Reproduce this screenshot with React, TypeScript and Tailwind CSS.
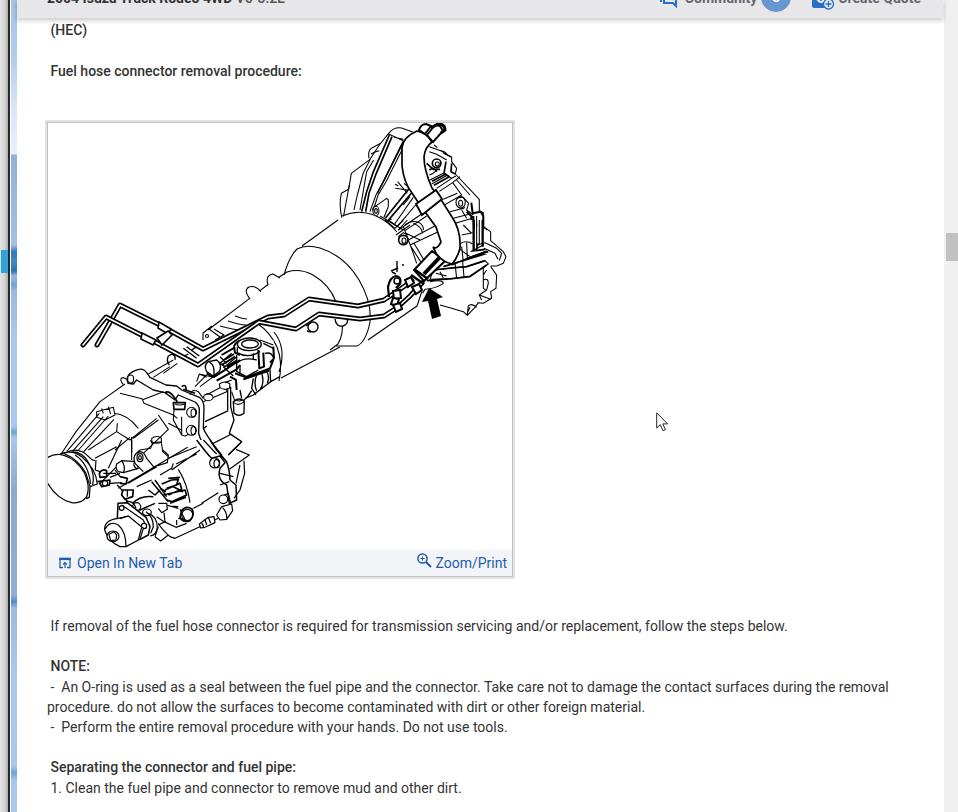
import React from "react";

const NB = "\u00a0";

function Tube({ d, outer = 5, inner = 1.6 }: { d: string; outer?: number; inner?: number }) {
  return (
    <g fill="none" strokeLinejoin="round" strokeLinecap="round">
      <path d={d} stroke="#000" strokeWidth={outer} />
      <path d={d} stroke="#fff" strokeWidth={inner} />
    </g>
  );
}

function BellHousing() {
  return (
    <g transform="translate(270 110) scale(.3333)" stroke="#000" strokeWidth="3.2" fill="none" strokeLinejoin="round">
      <path fill="#fff" d="M216 325Q206 285 214 250L236 238L244 190L300 148L328 105L356 70Q372 50 395 54L428 66" />
      <path d="M238 225L220 322M301 148L280 188L262 255L252 300M297 145Q293 122 304 115L332 100M303 132Q315 125 328 122M311 150L290 185L270 300" />
      <path strokeWidth="5" d="M358 75L309 188L290 245L275 305M366 80L319 190L297 250L287 305" />
      <path d="M356 72L400 92L340 215L318 255L300 305M408 96L348 215L324 256L310 300M372 82L400 88" />
      <path strokeWidth="4.5" d="M398 100L340 215L322 250" />
      <path fill="#fff" d="M308 302Q308 290 320 286L350 265L355 270L355 290L342 322" />
      <ellipse cx="318" cy="303" rx="9" ry="14" />
      <ellipse cx="318" cy="303" rx="4" ry="7" />
      <path d="M375 222L385 228M376 235L412 240M383 215L412 250M402 220L416 232" />
      <path strokeWidth="5" d="M418 235L346 325M424 250L354 332" />
      <path d="M430 262L372 345M437 285L382 350M400 285L420 260M330 318L400 360M345 335L365 327M455 312L385 360M470 318L405 362" />
      <path d="M405 345Q425 328 448 338Q462 348 460 360" />
      <path d="M478 110L512 122L545 142L545 155L560 175L556 192L628 268L628 302L640 308L640 350L652 360" />
      <path d="M478 125L500 133L530 150M520 130L545 142M512 122Q528 124 532 135M492 105L502 113" />
      <circle cx="500" cy="160" r="13" strokeWidth="5" />
      <circle cx="502" cy="162" r="6" />
      <path strokeWidth="5" d="M470 160L490 178L510 178M528 155L522 190L538 200M545 160L543 185L556 192M478 180Q495 170 500 185" />
      <path d="M478 195Q495 190 500 178M480 210L520 190L545 205M485 222L532 196M500 235L545 205L558 198M508 244L548 218L575 255L515 290M548 218L570 200M560 210L600 255M520 268L562 250" />
      <path strokeWidth="5" d="M486 214L528 192M492 226L538 200" />
      <ellipse cx="572" cy="277" rx="14" ry="17" />
      <ellipse cx="572" cy="280" rx="6" ry="9" />
      <path d="M562 264L580 262L596 280L590 300L610 315M585 292Q575 300 570 294" />
      <path strokeWidth="6" d="M604 278L608 310L632 305L640 318L640 358M610 318L612 358M590 305L604 318L604 330" />
      <path d="M550 325L600 312M556 340L602 326M620 318L620 350M575 300L590 325M540 305L580 295" />
    </g>
  );
}

function LowerHousing() {
  return (
    <g transform="translate(270 220) scale(.3333)" stroke="#000" strokeWidth="3.2" fill="none" strokeLinejoin="round">
      <path d="M640 20L662 35L662 62L700 95L708 110L700 130L680 138L662 138M645 68L680 85L695 100L688 122M642 85L675 100L684 118" />
      <path d="M662 140L680 165L678 205L662 215L665 235L640 250L625 248L615 262L592 286L580 275L545 265L510 255" />
      <path d="M640 130L640 205L650 212M640 180Q655 172 655 190L650 210L628 225L635 240M592 284L595 258Q605 248 620 262M600 262L590 284M650 150L640 165M628 225L662 238" />
      <path strokeWidth="7" d="M611 0L611 95M638 0L638 80" />
      <path d="M620 10L620 80M628 0L628 75M580 15L605 40M575 45L608 38M572 70Q590 60 608 72M570 88L600 110M575 80L580 125M590 68L592 115M602 95L640 75M606 110L650 92M620 75L645 68" />
      <path strokeWidth="5" d="M545 135L610 108L655 95M520 140L650 100M625 70L618 92L645 88" />
      <path fill="#fff" d="M490 150L555 143L590 140L645 122L655 132L600 168L545 176L480 178Z" />
      <path strokeWidth="5" d="M490 150L555 143L590 140L645 122M650 135L600 170L545 176L470 182" />
      <path d="M555 128L560 175M578 126L582 170" />
      <path d="M510 155L520 175M498 160L530 168M480 185Q520 178 520 190Q500 205 465 208L458 220" />
      <path d="M345 0L375 25M355 0L380 18M375 25L400 0M385 30L412 0M378 45L420 15M400 20L430 100L440 130M415 60L500 15M420 75L505 35M408 40L450 60M420 75L455 130M432 70L462 120M430 10Q455 20 458 40" />
      <circle cx="400" cy="60" r="14" fill="#fff" strokeWidth="5" />
      <ellipse cx="402" cy="62" rx="6" ry="8" />
      <path d="M385 50L400 38L415 45" />
    </g>
  );
}

function MainCase() {
  return (
    <g stroke="#000" strokeWidth="1.1" fill="none" strokeLinejoin="round">
      <path fill="#fff" stroke="none" d="M344 216Q362 208 380 217Q410 242 418 290L416 306L372 338L356 347L336 345L270 382L240 400L203 330L245 298L285 270L300 247Z" />
      <path d="M338 220L302 246M342 216Q358 209 374 215Q388 221 397 232" />
      <path d="M284 275Q289 257 297 249Q306 244 320 248Q345 256 359 280Q372 302 370 322Q366 342 357 346L336 346" />
      <path d="M270 283L287 272Q300 268 313 275Q330 285 336 302M342 319Q344 334 338 344L330 350M368 340L417 306L422 291M340 347L281 378" />
      <path d="M270 283L208 330" />
      <path fill="#fff" d="M250 299Q243 290 249 287Q256 285 261 292M268 285Q265 275 273 274L280 278" />
      <path d="M235 316Q243 319 247 319M228 321Q240 325 246 325M220 326Q235 330 240 330M214 329L224 335L215 340M203 340L203 333L212 326M209 329L220 337" />
      <circle cx="207" cy="336" r="1.5" />
      <path d="M258 324Q270 332 277 347Q283 362 279 381M274 332Q287 348 279 372" />
      <path d="M391 271L398 268M397 261L397 272M392 272L396 274" strokeWidth="1.4" />
      <circle cx="403" cy="265" r="1" fill="#000" stroke="none" />
    </g>
  );
}

function GearCase() {
  return (
    <g transform="translate(40 340) scale(.3333)" stroke="#000" strokeWidth="3.2" fill="none" strokeLinejoin="round">
      <path fill="#fff" stroke="none" d="M250 130L400 50L720 80L690 135L620 200L580 215L568 285L605 305L628 345L600 450L540 500L380 590L90 400L60 340Z" />
      <path d="M65 340L108 275L180 185L255 132M80 335L178 220M92 340L190 230M105 342L205 228M125 342L222 238" />
      <path d="M170 215L220 202L225 225L195 240L170 232ZM185 205L190 220M205 200L212 222" />
      <path d="M222 220Q260 222 295 265M232 250L230 275L145 330M230 275L270 300L350 235M275 290L275 360M225 330L270 292M280 295L355 240M355 225L385 268L300 350" />
      <path strokeWidth="4" fill="#fff" d="M264 130Q254 105 285 92Q308 80 320 98L330 112L378 135L410 138L425 150L478 172Q492 182 492 205L490 265Q500 290 545 345L520 350Q480 305 476 280L478 210Q478 196 465 186L415 165L405 180L375 158L340 150L310 132L290 120L280 132Z" />
      <ellipse cx="272" cy="117" rx="9" ry="12" fill="#fff" />
      <path d="M250 134Q238 120 245 114Q252 110 262 120M240 160L306 176L312 190L400 225L412 235M306 180L370 155M325 102L400 60M340 112L390 80M370 100L412 70" />
      <path strokeWidth="5" d="M375 158Q385 150 400 168L412 185M400 188L436 188L434 208L402 208ZM425 140Q440 130 438 150M430 148L465 160" />
      <path d="M405 192Q418 198 434 192M402 208L400 240L425 285L435 288L470 272M425 230L425 285M385 250L425 270" />
      <circle cx="455" cy="217" r="15" fill="#fff" />
      <ellipse cx="460" cy="219" rx="7" ry="12" />
      <circle cx="454" cy="271" r="15" fill="#fff" />
      <ellipse cx="460" cy="272" rx="7" ry="12" />
      <path d="M450 165Q455 145 475 155L490 175M465 140L500 105M478 102L520 112L555 90M470 125L478 102L500 112M490 170L545 140M490 185L560 155L562 140M520 110L480 140" />
      <ellipse cx="505" cy="172" rx="14" ry="10" fill="#fff" />
      <path d="M494 165Q505 157 517 166" />
      <path strokeWidth="4" d="M495 245L565 212M492 265L500 258M563 140L563 210M572 140L572 200L582 240L568 280L605 305L565 345M490 325L575 282" />
      <path fill="#fff" d="M538 132Q555 120 570 132L568 145Q553 152 540 143Z" />
      <path strokeWidth="4" fill="#fff" d="M580 185Q595 170 613 183L612 220Q597 232 582 220Z" />
      <path d="M580 187Q596 200 613 185M588 180Q597 186 606 180M575 155L585 185" />
      <path d="M335 295Q348 285 364 294L364 306Q350 314 336 306ZM338 308L332 325L300 330Q285 340 285 360M364 306L368 335L385 350M372 360L470 320" />
    </g>
  );
}

function ValveBlock() {
  return (
    <g transform="translate(40 340) scale(.3333)" stroke="#000" strokeWidth="4" fill="none" strokeLinejoin="round">
      <path fill="#fff" stroke="none" d="M580 0L700 0L712 60L690 125L620 170L580 120Z" />
      <path strokeWidth="6" d="M582 18Q590 2 610 0M582 18L585 38L600 45M700 20L702 55L690 68M655 30L658 85L672 80L670 38M560 80L590 62M520 112L555 90L600 60M530 122L590 88L600 75" />
      <ellipse cx="628" cy="13" rx="36" ry="19" fill="#fff" />
      <ellipse cx="630" cy="12" rx="25" ry="12" />
      <path d="M592 22L592 38Q625 58 660 34M590 45L590 95L620 110L655 90M590 70Q610 50 650 60M600 75L600 100M640 40L640 60M670 10L700 25M660 0L700 15M675 40Q695 35 700 52" />
      <path strokeWidth="6" d="M585 100L618 112L690 85L700 60M610 118L640 108L688 92M570 110L588 120L590 150" />
      <path d="M690 88L692 125L640 165L615 175M665 100Q675 130 660 150M650 105Q640 130 650 152M640 115L635 145L648 165M680 95Q690 110 682 130M635 152Q625 170 610 182M575 120L555 128M550 80L580 108M600 150L605 175M692 125L720 110" />
      <path d="M500 95Q490 75 505 65L530 60Q545 70 540 92L520 108ZM508 66Q525 75 522 105M540 50L560 70M575 40L540 70L555 80L590 50" />
      <path strokeWidth="6" d="M545 75L585 50M500 100L520 112M545 45L585 22M555 58L582 42" />
      <path d="M388 75Q378 62 385 48L400 40M395 42Q408 45 405 60M430 25L470 55M440 20L478 48M445 42L430 50M455 30L470 20" />
    </g>
  );
}

function TransferCase() {
  return (
    <g transform="translate(40 440) scale(.3333)" stroke="#000" strokeWidth="3.6" fill="none" strokeLinejoin="round">
      <path d="M60 42Q95 28 125 50Q168 85 172 132L150 140M78 38Q115 18 146 50Q160 65 165 60M95 35Q130 35 148 72Q165 105 158 135M105 45Q145 70 152 132" fill="#fff" />
      <path fill="#fff" d="M20 54Q45 38 72 46Q110 58 133 98Q152 140 140 170Q124 192 95 188Q50 178 20 125" />
      <path d="M75 42Q115 58 138 100L150 140L148 172L138 176M80 45L70 38" />
      <path d="M245 0L205 85M165 55L230 20M168 60L166 90L180 95M275 0L275 38M180 130L230 80M190 100L228 100" />
      <path fill="#fff" d="M230 72L245 62L290 65L295 85L250 98L235 95Q225 85 230 72Z" />
      <path d="M245 62Q258 80 250 98M285 65Q275 75 292 88" />
      <path strokeWidth="5" d="M178 100Q185 85 200 92L200 110L180 112ZM172 125L210 120L208 135L185 140L178 128M240 110L262 115L258 132L240 130M248 150L280 150L278 170L255 178L245 165Z" />
      <circle cx="195" cy="130" r="8" fill="#fff" />
      <path d="M210 112L240 100M210 130L245 128M232 135L250 155M255 178L265 185M262 150L262 170M225 90L240 110" />
      <path fill="#fff" d="M285 70Q275 42 300 35Q312 35 320 50L355 40L385 50L382 68L345 85L310 95Z" stroke="none" />
      <path d="M310 95L285 70Q275 42 300 35Q312 35 320 55L345 85" />
      <ellipse cx="300" cy="53" rx="9" ry="12" fill="#fff" />
      <ellipse cx="300" cy="53" rx="4" ry="6" />
      <path d="M332 0L335 8L364 6M368 30L385 45L382 68L350 78M235 145L443 22M265 130L350 80M290 140L335 120M395 90L480 30M360 105L395 85L400 70M408 72L470 42" />
      <path strokeWidth="4.5" d="M335 125L385 185M345 120L380 170M278 190Q300 165 340 170M325 150L345 165L360 150M282 200L300 210L345 190" />
      <circle cx="290" cy="200" r="12" fill="#fff" />
      <ellipse cx="321" cy="217" rx="13" ry="10" fill="#fff" />
      <path strokeWidth="5" d="M365 132L395 120L415 118L410 135L380 145M375 150L420 130L425 148L385 165M370 165L435 150L440 165L395 185L380 180M390 190L438 172M360 145L378 155M385 115L420 112M400 140L430 155" />
      <path d="M415 88Q442 130 450 188M355 190L380 190L382 208L365 218L355 205M372 218L375 245L355 255M415 200L385 198M380 195L415 205M485 190L535 158M460 205L490 190" />
      <path d="M410 240L410 255M350 230L372 245L408 262L440 250M355 250Q365 268 390 290L405 295L470 265L535 235M345 290L362 303L385 285M345 290L355 260" />
      <path strokeWidth="5" fill="#fff" d="M425 212Q438 195 456 207Q465 225 450 242Q430 250 420 232Z" />
      <circle cx="442" cy="225" r="17" />
      <path d="M420 208L438 245M415 235L430 238" />
      <path strokeWidth="4.5" fill="#fff" d="M470 0Q500 40 515 55L540 48L555 68L540 85Q530 120 560 135L568 190L590 180L588 135L570 120Q570 95 560 65L530 30L510 0" />
      <path d="M540 100L580 110M540 135L568 125M545 170L565 160L572 190M490 0L530 42" />
      <circle cx="524" cy="69" r="15" fill="#fff" />
      <ellipse cx="530" cy="71" rx="8" ry="12" />
      <path d="M588 28L628 45L568 88M612 62L614 100L600 150L582 175M600 75L588 130M605 5L565 45" />
      <circle cx="550" cy="178" r="13" fill="#fff" />
      <path fill="#fff" d="M545 200L575 192L578 212L560 238L540 240L530 225Z" />
      <path d="M548 203Q562 218 560 236" />
      <path fill="#fff" d="M478 252L505 232L522 230L525 248L495 262L482 264Z" />
      <path d="M505 232L512 250M495 238L500 255M485 250Q492 256 490 264" />
      <path strokeWidth="4.5" fill="#fff" d="M232 235L234 190L262 188L318 232L330 260L325 285L300 298Z" />
      <path d="M245 195L310 240L320 265M325 220Q352 230 352 262Q350 285 330 288M318 215Q340 230 340 260L332 280M258 185Q280 180 288 205" />
      <circle cx="245" cy="204" r="7" fill="#fff" />
      <circle cx="312" cy="258" r="8" fill="#fff" />
      <path fill="#fff" d="M194 270Q192 240 235 235L265 228L310 265L300 298L258 320L240 320Q205 305 194 270Z" />
      <path d="M195 268Q210 240 235 255Q258 275 258 318M265 228L240 236M305 262L295 300" />
      <ellipse cx="219" cy="289" rx="18" ry="16" fill="#fff" />
      <path d="M207 283L222 275L230 285L228 300L212 302Z" />
    </g>
  );
}

function TransmissionDrawing() {
  return (
    <svg className="block w-full" viewBox="48 123 464 427" role="img" aria-label="Transmission with fuel hose connector">
      <BellHousing />
      <MainCase />
      <LowerHousing />
      <GearCase />
      <ValveBlock />
      <TransferCase />
      <g fill="#fff" stroke="#000" strokeWidth="1.4">
        <circle cx="313" cy="327" r="5" />
        <path d="M306 326L312 322M307 331L311 332" />
        <path d="M335 319Q336 327 343 326Q349 324 347 318" />
      </g>
      <Tube d="M97 345L120 305L160 325L203 349L268 317L284 315L309 299L358 306L384 300L396 292L412 281" />
      <Tube d="M83 345L106 317L155 342L198 365L259 322L296 329L319 314L360 319L384 316L398 307L410 296L422 283" />
      <g fill="#fff" stroke="#000" strokeWidth="1.6">
        <path d="M159 322L171 329L168 334L158 328Z" />
        <path d="M142 333L156 340L153 345L141 339Z" />
        <path d="M157 338L168 331L172 335L162 345Z" />
      </g>
      <path d="M389 297L388 287Q390 277 396 276Q402 277 400 284L396 288" fill="none" stroke="#000" strokeWidth="2.2" />
      <circle cx="397" cy="281" r="3" fill="#fff" stroke="#000" strokeWidth="1.4" />
      <g stroke="#000" strokeWidth="2" fill="#fff">
        <path d="M393 291L400 290L401 298L394 299Z" />
        <path d="M393 298L399 299L397 306L391 304Z" />
        <path d="M405 280L411 277L414 283L408 287Z" />
        <path d="M412 287L419 284L422 290L416 294Z" />
        <path d="M393 305L400 303L402 309L396 312Z" />
        <path d="M414 270L432 251L445 261L424 281Z" />
      </g>
      <path d="M424 274L440 257" stroke="#000" strokeWidth="4" />
      <path d="M414 269L428 279M411 275L424 284" stroke="#000" strokeWidth="2.4" />
      <path
        d="M417 131Q403 137 402 148L402 166Q404 183 412 193L420 205L436 227L441 242Q437 250 433 247L436 253Q442 262 452 264Q458 257 460 248Q461 230 452 217L440 198L432 188Q424 170 424 157Q425 147 432 142Q427 133 417 131Z"
        fill="#fff"
        stroke="#000"
        strokeWidth="1.7"
      />
      <path d="M416 204L436 190L442 199L422 215Z" fill="#fff" stroke="#000" strokeWidth="1.9" />
      <g fill="#fff" stroke="#000" strokeWidth="1.9">
        <path d="M419 130Q421 124 426 124L431 126L425 134Z" />
        <path d="M427 135L435 125L440 126L443 131L433 142Z" />
        <path d="M431 128L438 124Q445 124 445 130L441 133" fill="none" strokeWidth="3" />
      </g>
      <path d="M429 288L443 297L437 299L441 316L432 319L428 301L422 302Z" fill="#000" />
    </svg>
  );
}

function TopBar() {
  return (
    <header className="relative z-10 mr-px flex h-[18px] items-end justify-between bg-[#e7e7ea] pr-[22px] pl-[30px] text-sm leading-5 shadow-[0_2px_4px_1px_rgba(0,0,0,0.18)]">
      <h1 className="mb-[10px] font-bold whitespace-nowrap text-[#333]">
        2004 Isuzu Truck Rodeo 4WD <span className="font-medium text-[#555]">V6-3.2L</span>
      </h1>
      <nav className="flex items-end font-bold text-[#63676d]">
        <a href="#community" className="mb-[10px] flex items-end gap-[7px]">
          <svg className="size-[18px]" viewBox="0 0 18 18" fill="none" stroke="#2a6fc4" strokeWidth="2">
            <path d="M4 2v11h9l3 3V4M1 1v11" />
          </svg>
          Community
        </a>
        <span className="mb-[6px] ml-[4px] flex size-[30px] items-center justify-center rounded-full bg-[#6796d0] text-white">3</span>
        <a href="#quote" className="mb-[10px] ml-[21px] flex items-end gap-[4px]">
          <svg className="-mb-[2px] size-[22px]" viewBox="0 0 22 22">
            <path d="M0 5h17v15H2q-2 0-2-2z" fill="#2a6fc4" />
            <path d="M5 11q4 6 8 0" fill="none" stroke="#fff" strokeWidth="2" />
            <circle cx="16.5" cy="16" r="5" fill="#e7e7ea" stroke="#2a6fc4" strokeWidth="1.3" />
            <path d="M13.5 16h6M16.5 13v6" stroke="#2a6fc4" strokeWidth="1.3" />
          </svg>
          Create Quote
        </a>
      </nav>
    </header>
  );
}

function FigureCard() {
  return (
    <figure className="mt-[41px] w-[466px] border border-[#c3c3c3] shadow-[0_0_0_2px_#e2e2e2]">
      <TransmissionDrawing />
      <figcaption className="flex h-[26px] items-center justify-between bg-[#f2f4f8] pr-[5px] pl-[11px] text-[#1f5cab]">
        <a href="#tab" className="flex items-center gap-[6px]">
          <svg className="size-[12px]" viewBox="0 0 12 12" fill="none" stroke="currentColor">
            <path d="M4 10.5H1v-9h10v9H8" strokeWidth="1.3" />
            <path d="M6 11V5.5M4 7.5l2-2 2 2" strokeWidth="1.2" />
            <path d="M.4 2h11.2" strokeWidth="2.2" />
          </svg>
          Open In New Tab
        </a>
        <a href="#zoom" className="flex items-center gap-[3px]">
          <svg className="mb-[6px] size-[15px]" viewBox="0 0 15 15" fill="none" stroke="currentColor" strokeWidth="1.5">
            <circle cx="5.5" cy="5.5" r="4.6" />
            <path d="M9 9l5 5" strokeWidth="2" />
            <path d="M3.5 5.5h4M5.5 3.5v4" strokeWidth="1" />
          </svg>
          Zoom/Print
        </a>
      </figcaption>
    </figure>
  );
}

export default function App() {
  return (
    <div className="relative flex h-screen overflow-hidden bg-white font-['Roboto','Liberation_Sans',sans-serif] text-sm leading-5 text-[#333]">
      <div className="flex w-[8px] shrink-0 flex-col bg-[linear-gradient(90deg,#e2e3e2_0%,#d3d4d3_60%,#aaa_100%)] pt-[250px]">
        <div className="ml-px h-[23px] bg-[#2fa3dc]" />
      </div>
      <div className="w-[2px] shrink-0 bg-[#252729]" />
      <div className="ml-px w-[6px] shrink-0 bg-[linear-gradient(180deg,#a9c4e6_0px,#b3cdeb_60px,#dbe6f5_110px,#e9f0fa_154px,#93b1d8_155px,#a3bfe4_245px,#2c78b8_252px,#4389c4_262px,#2c74b0_271px,#9dbbe0_276px,#6fa5d2_285px,#9bb8de_291px,#abc8f0_340px,#abc8f0_426px,#6ba6d4_432px,#a8c6ee_438px,#8eaad0_490px,#90add6_595px,#4f8dc4_602px,#9dbbe3_608px,#abc8f0_680px,#a9c6ee_766px,#6ba3d3_773px,#a9c6ee_780px,#abc8f0_100%)]" />
      <div className="min-w-0 flex-1">
        <TopBar />
        <main className="pt-[2px] pr-[30px] pl-[30px]">
          <p className="font-medium">{`${NB}(HEC)`}</p>
          <p className="mt-[21px] font-medium">{`${NB}Fuel hose connector removal procedure:`}</p>
          <FigureCard />
          <p className="mt-[39px]">
            {`${NB}If removal of the fuel hose connector is required for transmission servicing and/or replacement, follow the steps below.`}
          </p>
          <p className="mt-5 font-medium">{`${NB}NOTE:`}</p>
          <p className="mt-px">
            {`${NB}-${NB} An O-ring is used as a seal between the fuel pipe and the connector. Take care not to damage the contact surfaces during the removal procedure. do not allow the surfaces to become contaminated with dirt or other foreign material.`}
          </p>
          <p>{`${NB}-${NB} Perform the entire removal procedure with your hands. Do not use tools.`}</p>
          <p className="mt-5 font-medium">{`${NB}Separating the connector and fuel pipe:`}</p>
          <p className="mt-px">{`${NB}1. Clean the fuel pipe and connector to remove mud and other dirt.`}</p>
        </main>
      </div>
      <div className="w-[14px] shrink-0 bg-[#f0f0f0] pt-[233px] pl-[2px]">
        <div className="h-[28px] bg-[#c1c1c1]" />
      </div>
      <svg className="absolute top-[412px] left-[656px] h-[20px] w-[13px]" viewBox="0 0 13 20">
        <path d="M.7.9V16l3.6-3.3L7 18.7l2.4-1-2.6-5.8h4.9z" fill="#fff" stroke="#23263a" strokeWidth="1" />
      </svg>
    </div>
  );
}
